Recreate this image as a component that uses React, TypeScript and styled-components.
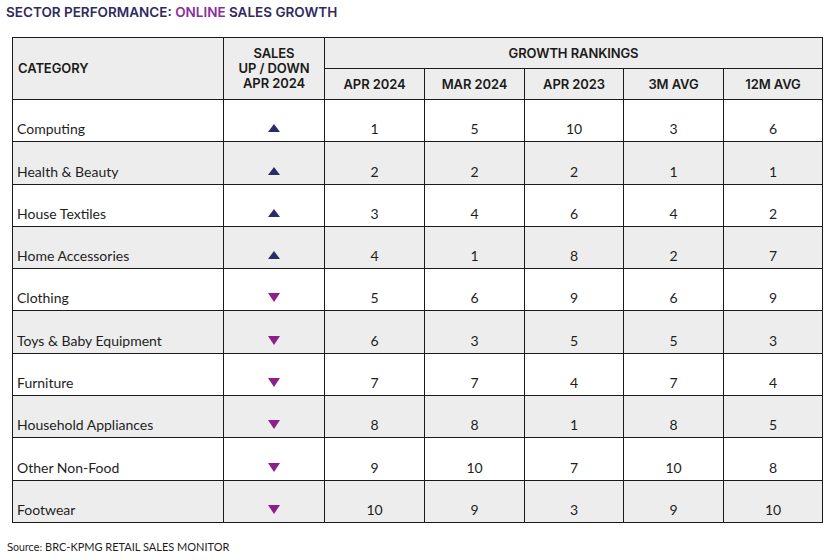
import React from "react";
import styled, { createGlobalStyle } from "styled-components";

type Row = {
  category: string;
  up: boolean;
  ranks: number[];
};

const rows: Row[] = [
  { category: "Computing", up: true, ranks: [1, 5, 10, 3, 6] },
  { category: "Health & Beauty", up: true, ranks: [2, 2, 2, 1, 1] },
  { category: "House Textiles", up: true, ranks: [3, 4, 6, 4, 2] },
  { category: "Home Accessories", up: true, ranks: [4, 1, 8, 2, 7] },
  { category: "Clothing", up: false, ranks: [5, 6, 9, 6, 9] },
  { category: "Toys & Baby Equipment", up: false, ranks: [6, 3, 5, 5, 3] },
  { category: "Furniture", up: false, ranks: [7, 7, 4, 7, 4] },
  { category: "Household Appliances", up: false, ranks: [8, 8, 1, 8, 5] },
  { category: "Other Non-Food", up: false, ranks: [9, 10, 7, 10, 8] },
  { category: "Footwear", up: false, ranks: [10, 9, 3, 9, 10] },
];

const periods = ["APR 2024", "MAR 2024", "APR 2023", "3M AVG", "12M AVG"];

const GlobalStyle = createGlobalStyle`
  html, body {
    margin: 0;
    padding: 0;
    background: #fff;
  }
`;

const Page = styled.div`
  width: 835px;
  height: 560px;
  box-sizing: border-box;
  padding: 5px 0 0 6px;
  font-family: "Lato", "Liberation Sans", sans-serif;
  color: #1e1e1e;
`;

const Title = styled.h1`
  margin: 0;
  font-family: "Inter", "Liberation Sans", sans-serif;
  font-weight: 600;
  font-size: 13.5px;
  color: #2f2b5f;
  line-height: 15px;
`;

const Highlight = styled.span`
  color: #8a2d9e;
`;

const Table = styled.table`
  margin: 17px 0 0 6px;
  border-collapse: collapse;
  table-layout: fixed;
  width: 811px;
`;

const HeadCell = styled.th<{ $left?: boolean }>`
  background: #ededed;
  border: 1px solid #1a1a1a;
  font-family: "Inter", "Liberation Sans", sans-serif;
  font-weight: 600;
  font-size: 13px;
  letter-spacing: -0.1px;
  line-height: 15px;
  color: #1a1a1a;
  text-align: ${(p) => (p.$left ? "left" : "center")};
  padding: 0 ${(p) => (p.$left ? "5px" : "0")};
  height: 30px;
  vertical-align: middle;
`;

const BodyRow = styled.tr<{ $shade: boolean }>`
  background: ${(p) => (p.$shade ? "#ededed" : "#fff")};
  height: 42.3px;
`;

const Cell = styled.td<{ $left?: boolean }>`
  border: 1px solid #1a1a1a;
  font-size: 14px;
  line-height: 16px;
  text-align: ${(p) => (p.$left ? "left" : "center")};
  padding: 0 ${(p) => (p.$left ? "4px" : "0")} 4px;
  vertical-align: bottom;
`;

const Arrow = styled.span<{ $up: boolean }>`
  display: inline-block;
  width: 0;
  height: 0;
  border-left: 6px solid transparent;
  border-right: 6px solid transparent;
  ${(p) =>
    p.$up
      ? "border-bottom: 8px solid #2b2a6a; margin-bottom: 2px;"
      : "border-top: 9px solid #8c1f8a; margin-bottom: 1px;"}
`;

const Source = styled.p`
  margin: 17px 0 0 1px;
  font-size: 11px;
  color: #1e1e1e;
`;

const SourceLabel = styled.span`
  font-family: "Liberation Sans Narrow", "DejaVu Sans Condensed", sans-serif;
  font-stretch: condensed;
  letter-spacing: -0.3px;
`;

export default function App() {
  return (
    <Page>
      <GlobalStyle />
      <Title>
        SECTOR PERFORMANCE: <Highlight>ONLINE</Highlight> SALES GROWTH
      </Title>
      <Table>
        <colgroup>
          <col style={{ width: 211 }} />
          <col style={{ width: 101 }} />
          <col style={{ width: 100 }} />
          <col style={{ width: 100 }} />
          <col style={{ width: 99 }} />
          <col style={{ width: 100 }} />
          <col style={{ width: 99 }} />
        </colgroup>
        <thead>
          <tr>
            <HeadCell $left rowSpan={2}>
              CATEGORY
            </HeadCell>
            <HeadCell rowSpan={2}>
              SALES
              <br />
              UP / DOWN
              <br />
              APR 2024
            </HeadCell>
            <HeadCell colSpan={5}>GROWTH RANKINGS</HeadCell>
          </tr>
          <tr>
            {periods.map((p) => (
              <HeadCell key={p}>{p}</HeadCell>
            ))}
          </tr>
        </thead>
        <tbody>
          {rows.map((row, i) => (
            <BodyRow key={row.category} $shade={i % 2 === 1}>
              <Cell $left>{row.category}</Cell>
              <Cell>
                <Arrow $up={row.up} />
              </Cell>
              {row.ranks.map((r, j) => (
                <Cell key={j}>{r}</Cell>
              ))}
            </BodyRow>
          ))}
        </tbody>
      </Table>
      <Source>
        <SourceLabel>Source:</SourceLabel> BRC-KPMG RETAIL SALES MONITOR
      </Source>
    </Page>
  );
}
